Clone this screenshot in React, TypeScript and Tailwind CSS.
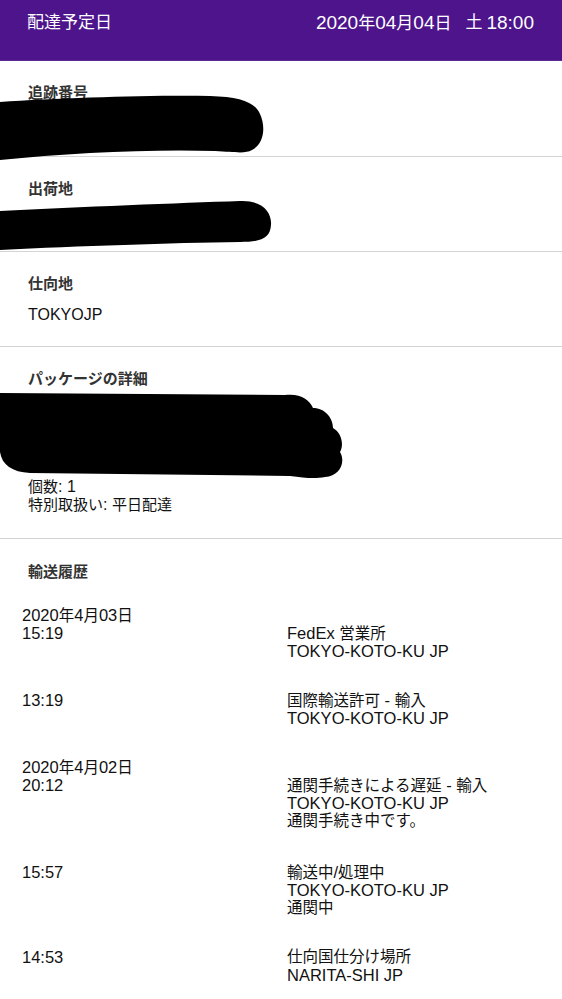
import React from "react";

const font = {
  fontFamily: '"Liberation Sans", "Noto Sans CJK JP", sans-serif',
};

function M({ text, latin }: { text: string; latin: string }) {
  const parts = text.split(/([\x20-\x7E]+)/).filter((p) => p.length > 0);
  return (
    <>
      {parts.map((p, i) =>
        /[\x20-\x7E]/.test(p) ? (
          <span key={i} className={latin}>
            {p}
          </span>
        ) : (
          <React.Fragment key={i}>{p}</React.Fragment>
        )
      )}
    </>
  );
}

function Divider() {
  return <div className="h-px w-full bg-[#d4d4d4]" />;
}

function Label({ children }: { children: React.ReactNode }) {
  return (
    <div className="text-[15px] leading-[20px] font-bold text-[#333]">{children}</div>
  );
}

type Entry = { date?: string; time: string; lines: string[]; mb: string };

const entries: Entry[] = [
  { date: "2020年4月03日", time: "15:19", lines: ["FedEx 営業所", "TOKYO-KOTO-KU JP"], mb: "mb-[31px]" },
  { time: "13:19", lines: ["国際輸送許可 - 輸入", "TOKYO-KOTO-KU JP"], mb: "mb-[31px]" },
  {
    date: "2020年4月02日",
    time: "20:12",
    lines: ["通関手続きによる遅延 - 輸入", "TOKYO-KOTO-KU JP", "通関手続き中です。"],
    mb: "mb-[33px]",
  },
  { time: "15:57", lines: ["輸送中/処理中", "TOKYO-KOTO-KU JP", "通関中"], mb: "mb-[31px]" },
  { time: "14:53", lines: ["仕向国仕分け場所", "NARITA-SHI JP"], mb: "mb-[31px]" },
];

const TL = "text-[16.5px] leading-[18px]";
const BL = "text-[16px] leading-[18px]";
const HL = "text-[19px] leading-[24px]";

export default function App() {
  return (
    <div className="w-[562px] h-[999px] overflow-hidden bg-white text-[#111]" style={font}>
      {/* Header */}
      <div className="h-[61px] bg-[#4d148c] border-b border-[#5a2a94] flex justify-between items-start pt-[11px] pl-[27px] pr-[28px] text-white text-[17px] leading-[24px]">
        <span className="h-[24px]">配達予定日</span>
        <span className="flex items-start h-[24px]">
          <span className="h-[24px] overflow-hidden">
            <M text="2020年04月04日" latin={HL} />
          </span>
          <span className="ml-[14px]">土</span>
          <span className={"ml-[4px] " + HL}>18:00</span>
        </span>
      </div>

      {/* 追跡番号 */}
      <div className="relative pt-[22px] pb-[22px] px-[28px]">
        <Label>追跡番号</Label>
        <div className="h-[20px] mt-[11px]" />
        <svg className="absolute left-0 top-0 z-10 overflow-visible" width="562" height="100">
          <g transform="translate(0,-62)">
            <path
              d="M0,103 C60,99 150,96 210,97 C240,98 255,103 260,115 C266,128 264,145 252,151 C245,155 235,153 215,152 C150,150 70,154 0,161 Z"
              fill="#000"
            />
          </g>
        </svg>
      </div>
      <Divider />

      {/* 出荷地 */}
      <div className="relative pt-[22px] pb-[21px] px-[28px]">
        <Label>出荷地</Label>
        <div className="h-[20px] mt-[11px]" />
        <svg className="absolute left-0 top-0 z-10 overflow-visible" width="562" height="100">
          <g transform="translate(0,-157)">
            <path
              d="M0,211 C80,207 180,203 240,201 C262,200 272,212 271,225 C270,238 262,242 240,242 C170,243 80,246 0,250 Z"
              fill="#000"
            />
          </g>
        </svg>
      </div>
      <Divider />

      {/* 仕向地 */}
      <div className="pt-[22px] pb-[21px] px-[28px]">
        <Label>仕向地</Label>
        <div className="mt-[11px] text-[16px] leading-[20px]">TOKYOJP</div>
      </div>
      <Divider />

      {/* パッケージの詳細 */}
      <div className="relative pt-[22px] pb-[24px] px-[28px]">
        <Label>パッケージの詳細</Label>
        <div className="h-[79px] mt-[10px]" />
        <div className="text-[15px] leading-[18px]">
          <div className="h-[18px]">
            <M text="個数: 1" latin={BL} />
          </div>
          <div className="h-[18px]">
            <M text="特別取扱い: 平日配達" latin={BL} />
          </div>
        </div>
        <svg className="absolute left-0 top-0 z-10 overflow-visible" width="562" height="200">
          <g transform="translate(0,-347)">
            <path
              d="M0,393 L285,395 C300,393 310,400 313,408 C325,408 333,418 333,428 C342,433 344,445 340,452 C346,462 340,476 325,477 C315,479 305,478 290,476 L30,473 C12,472 2,465 0,452 Z"
              fill="#000"
            />
          </g>
        </svg>
      </div>
      <Divider />

      {/* 輸送履歴 */}
      <div className="pt-[23px] px-[28px]">
        <Label>輸送履歴</Label>
      </div>
      <div className="pt-[24px] pl-[22px] text-[15.5px] leading-[18px] text-[#111]">
        {entries.map((e, i) => (
          <div key={i} className={e.mb}>
            {e.date && (
              <div className="h-[18px]">
                <M text={e.date} latin={TL} />
              </div>
            )}
            <div className="flex">
              <div className={"w-[265px] shrink-0 h-[18px] " + TL}>{e.time}</div>
              <div className="flex flex-col">
                {e.lines.map((l, j) => (
                  <div key={j} className="h-[18px]">
                    <M text={l} latin={TL} />
                  </div>
                ))}
              </div>
            </div>
          </div>
        ))}
      </div>
    </div>
  );
}
